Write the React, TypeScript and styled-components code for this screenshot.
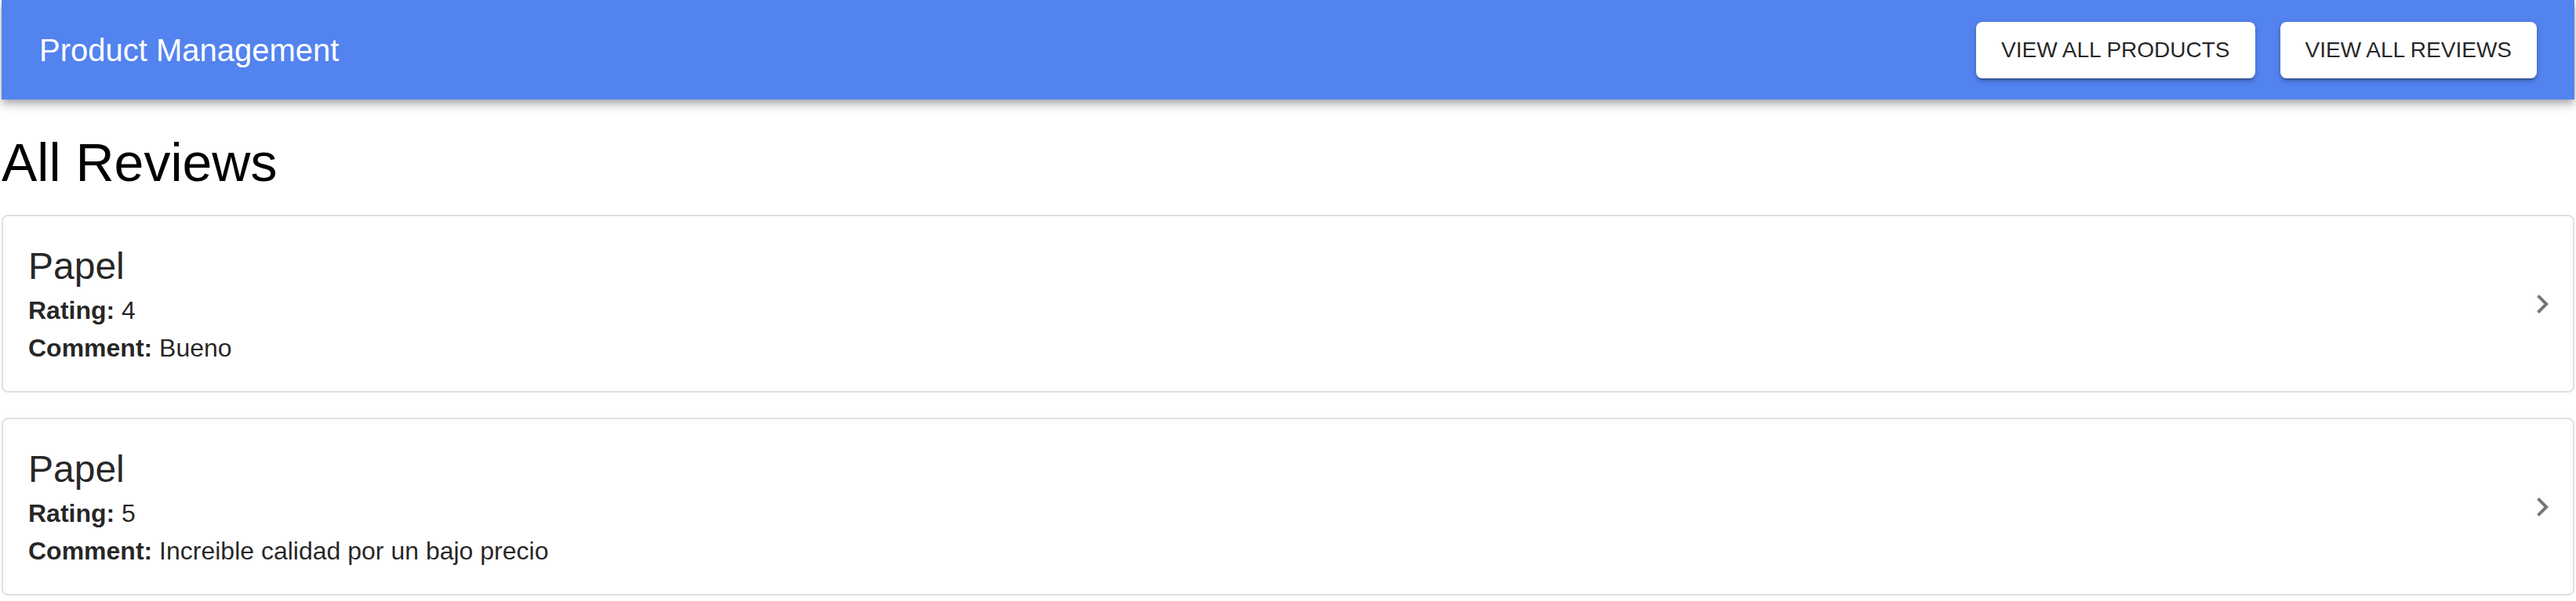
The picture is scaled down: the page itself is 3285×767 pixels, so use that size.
import React from "react";
import styled, { createGlobalStyle } from "styled-components";

const GlobalStyle = createGlobalStyle`
  html, body {
    margin: 0;
    padding: 0;
    background: #ffffff;
  }
  body {
    font-family: "Liberation Sans", Arial, Helvetica, sans-serif;
    -webkit-font-smoothing: antialiased;
  }
  * { box-sizing: border-box; }
`;

const Page = styled.div`
  padding: 0 2px;
  display: flex;
  flex-direction: column;
`;

const AppBar = styled.header`
  height: 127px;
  background: #5383ef;
  display: flex;
  align-items: center;
  justify-content: space-between;
  padding: 0 48px;
  box-shadow: 0px 4px 8px -2px rgba(0, 0, 0, 0.2),
    0px 8px 10px 0px rgba(0, 0, 0, 0.14),
    0px 2px 20px 0px rgba(0, 0, 0, 0.12);
  position: relative;
  z-index: 1;
`;

const Brand = styled.div`
  color: #ffffff;
  font-size: 40px;
  line-height: 64px;
  font-weight: 400;
`;

const NavGroup = styled.nav`
  display: flex;
  align-items: center;
  gap: 32px;
`;

const NavButton = styled.button`
  height: 72px;
  padding: 0 32px;
  border: none;
  border-radius: 8px;
  background: #ffffff;
  color: rgba(0, 0, 0, 0.87);
  font-family: "Liberation Sans", Arial, Helvetica, sans-serif;
  font-size: 28px;
  font-weight: 400;
  text-transform: uppercase;
  letter-spacing: 0;
  cursor: pointer;
  box-shadow: 0px 6px 2px -4px rgba(0, 0, 0, 0.2),
    0px 4px 4px 0px rgba(0, 0, 0, 0.14),
    0px 2px 10px 0px rgba(0, 0, 0, 0.12);
`;

const Heading = styled.h1`
  margin: 38px 0 25px;
  font-size: 68px;
  line-height: 84px;
  font-weight: 400;
  color: #000000;
`;

const List = styled.div`
  display: flex;
  flex-direction: column;
  gap: 32px;
`;

const Card = styled.div`
  display: flex;
  align-items: center;
  border: 2px solid #e0e0e0;
  border-radius: 8px;
  background: #ffffff;
  padding: 32px 15px 31px 32px;
`;

const CardBody = styled.div`
  flex: 1;
  display: flex;
  flex-direction: column;
`;

const ProductName = styled.div`
  font-size: 48px;
  line-height: 64px;
  color: rgba(0, 0, 0, 0.87);
`;

const Detail = styled.div`
  font-size: 32px;
  line-height: 48px;
  color: rgba(0, 0, 0, 0.87);
`;

const Label = styled.strong`
  font-weight: 700;
`;

const Chevron = styled.svg`
  width: 48px;
  height: 48px;
  flex: none;
  fill: rgba(0, 0, 0, 0.54);
`;

const reviews = [
  { product: "Papel", rating: 4, comment: "Bueno" },
  { product: "Papel", rating: 5, comment: "Increible calidad por un bajo precio" },
];

export default function App() {
  return (
    <>
      <GlobalStyle />
      <Page>
        <AppBar>
          <Brand>Product Management</Brand>
          <NavGroup>
            <NavButton>View All Products</NavButton>
            <NavButton>View All Reviews</NavButton>
          </NavGroup>
        </AppBar>
        <Heading>All Reviews</Heading>
        <List>
          {reviews.map((r, i) => (
            <Card key={i}>
              <CardBody>
                <ProductName>{r.product}</ProductName>
                <Detail>
                  <Label>Rating:</Label> {r.rating}
                </Detail>
                <Detail>
                  <Label>Comment:</Label> {r.comment}
                </Detail>
              </CardBody>
              <Chevron viewBox="0 0 24 24" aria-hidden="true">
                <path d="M10 6 8.59 7.41 13.17 12l-4.58 4.59L10 18l6-6z" />
              </Chevron>
            </Card>
          ))}
        </List>
      </Page>
    </>
  );
}
